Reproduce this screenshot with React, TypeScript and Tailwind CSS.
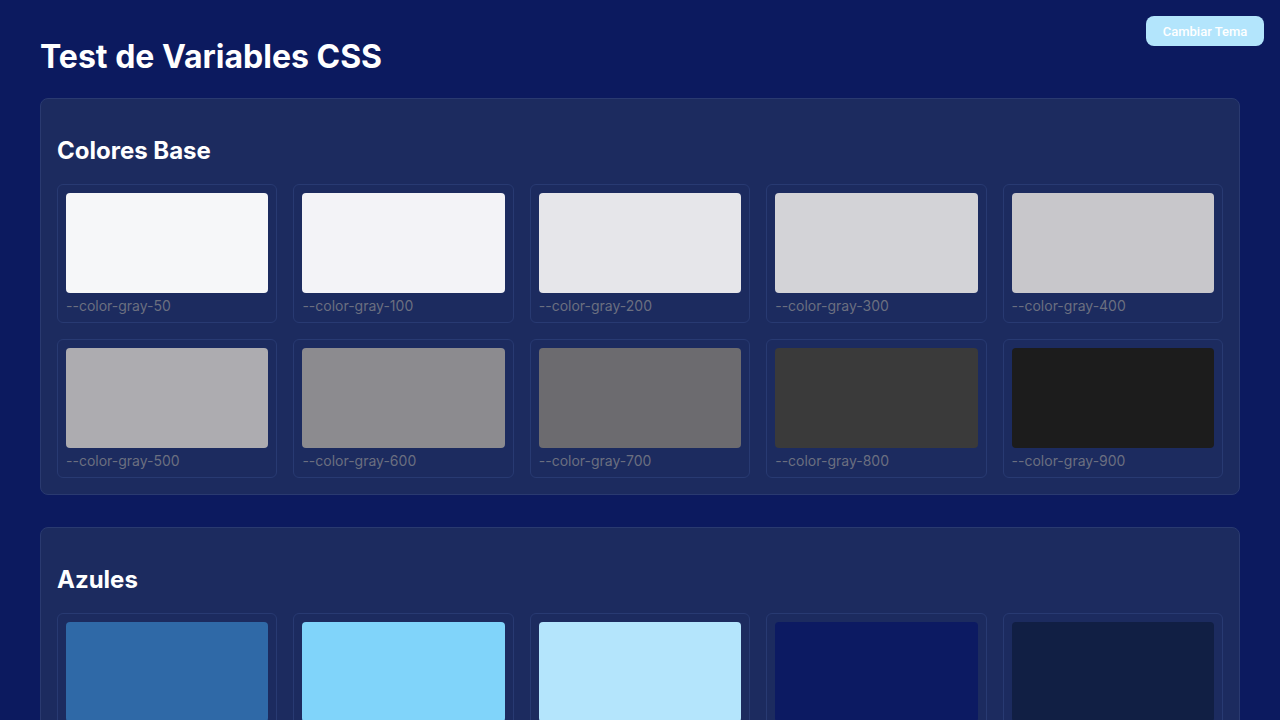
const grays = [
  { name: "--color-gray-50", hex: "#f6f7f9" },
  { name: "--color-gray-100", hex: "#f3f3f7" },
  { name: "--color-gray-200", hex: "#e6e6ea" },
  { name: "--color-gray-300", hex: "#d3d3d7" },
  { name: "--color-gray-400", hex: "#c8c7cb" },
  { name: "--color-gray-500", hex: "#adacb0" },
  { name: "--color-gray-600", hex: "#8c8b8f" },
  { name: "--color-gray-700", hex: "#6c6b6f" },
  { name: "--color-gray-800", hex: "#3a3a3a" },
  { name: "--color-gray-900", hex: "#1c1c1c" },
];

const blues = [
  { name: "--color-blue-600", hex: "#2f69a7" },
  { name: "--color-blue-300", hex: "#80d4fa" },
  { name: "--color-blue-100", hex: "#b4e5fc" },
  { name: "--color-blue-900", hex: "#0c1a62" },
  { name: "--color-blue-950", hex: "#111f44" },
];

type Swatch = { name: string; hex: string };

function ColorCard({ c }: { c: Swatch }) {
  return (
    <div className="rounded-md border border-[#283a72] p-2">
      {/* swatch color comes from data */}
      <div className="h-[100px] rounded" style={{ backgroundColor: c.hex }} />
      <div className="mt-[5px] text-sm leading-4 text-[#6b6f80]">{c.name}</div>
    </div>
  );
}

function Section({ title, colors }: { title: string; colors: Swatch[] }) {
  return (
    <section className="rounded-lg border border-[#2a3a70] bg-[#1c2b5f] p-4">
      <h2 className="mt-[20px] mb-[17px] text-2xl leading-8 font-bold text-white">{title}</h2>
      <div className="grid grid-cols-5 gap-4">
        {colors.map((c) => (
          <ColorCard key={c.name} c={c} />
        ))}
      </div>
    </section>
  );
}

export default function App() {
  return (
    <div className="relative min-h-screen bg-[#0c1a5f] px-10 pt-[36px] pb-10 font-['Inter','Noto_Sans',sans-serif]">
      <button className="absolute top-4 right-4 h-[30px] w-[118px] rounded-lg bg-[#b3e5fc] pt-px text-[13px] font-medium text-white font-['Roboto','Liberation_Sans',sans-serif]">
        Cambiar Tema
      </button>
      <h1 className="mb-5 text-[32px] leading-[42px] font-bold text-white">Test de Variables CSS</h1>
      <div className="flex flex-col gap-8">
        <Section title="Colores Base" colors={grays} />
        <Section title="Azules" colors={blues} />
      </div>
    </div>
  );
}
